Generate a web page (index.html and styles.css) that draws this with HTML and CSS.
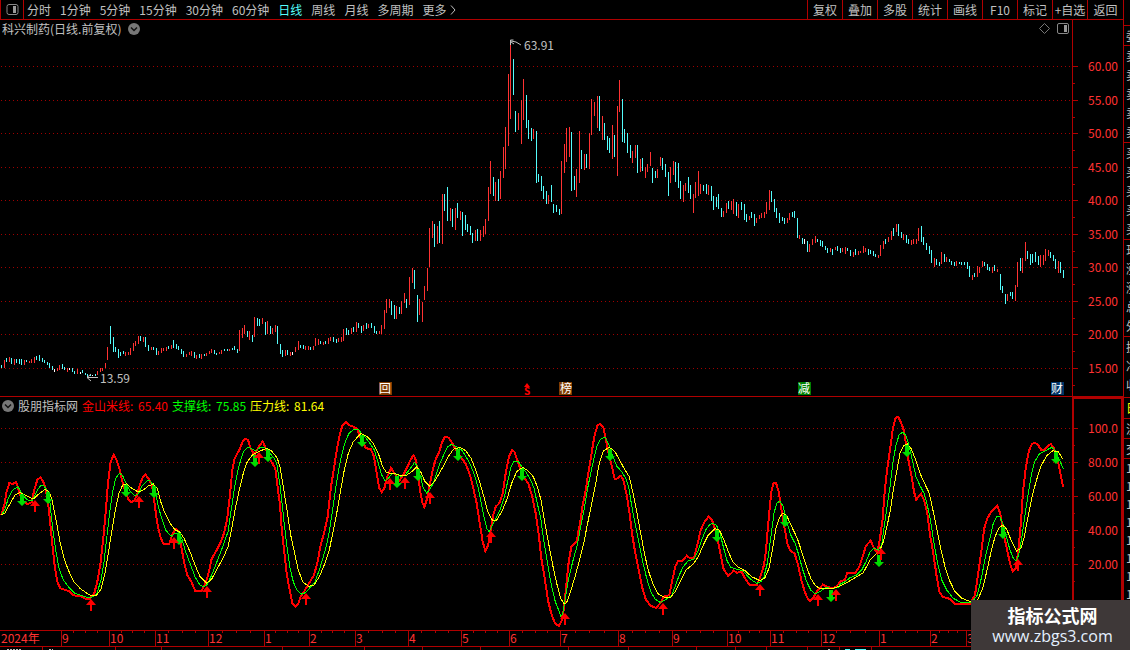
FILE: index.html
```html
<!DOCTYPE html>
<html lang="zh-CN">
<head>
    <meta charset="UTF-8">
    <meta name="viewport" content="width=device-width, initial-scale=1.0">
    <title>科兴制药 日线</title>
    <link rel="stylesheet" href="styles.css">
</head>
<body>

<div class="app">
    <main class="main">
        <nav class="toolbar">
            <button class="layout-btn" aria-label="布局">
                <svg width="13" height="11" viewBox="0 0 13 11"><rect x="1" y="0.5" width="11" height="10" rx="2" fill="none" stroke="#888"/><rect x="7" y="2" width="3" height="7" fill="#999"/></svg>
            </button>
            <div class="periods">
                <button>分时</button>
                <button>1分钟</button>
                <button>5分钟</button>
                <button>15分钟</button>
                <button>30分钟</button>
                <button>60分钟</button>
                <button class="active">日线</button>
                <button>周线</button>
                <button>月线</button>
                <button>多周期</button>
                <button class="more">更多
                    <svg width="6" height="10" viewBox="0 0 6 10"><path d="M1 0.5l4 4.5l-4 4.5" fill="none" stroke="#c0c0c0"/></svg>
                </button>
            </div>
            <div class="tools">
                <button>复权</button>
                <button>叠加</button>
                <button>多股</button>
                <button>统计</button>
                <button>画线</button>
                <button>F10</button>
                <button>标记</button>
                <button>+自选</button>
                <button>返回</button>
            </div>
        </nav>

        <section class="panel price">
            <header class="panel-head">
                <h1>科兴制药(日线.前复权)</h1>
                <button class="round" aria-label="展开">
                    <svg width="12" height="12" viewBox="0 0 12 12"><circle cx="6" cy="6" r="6" fill="#777"/><path d="M3 4.5l3 3l3-3" fill="none" stroke="#111" stroke-width="1.5"/></svg>
                </button>
                <div class="head-icons">
                    <svg width="11" height="11" viewBox="0 0 11 11"><path d="M5.5 0.5l5 5l-5 5l-5-5z" fill="none" stroke="#777"/></svg>
                    <svg width="12" height="12" viewBox="0 0 12 12"><rect x="0.5" y="0.5" width="11" height="10" rx="1.5" fill="none" stroke="#888"/><rect x="7" y="2" width="3" height="7" fill="#999"/></svg>
                </div>
                <div class="axis-cell"></div>
            </header>
            <svg class="plot" viewBox="0 38 1123 358">
                <g id="price-grid"></g>
                <g id="candles"></g>
                <path class="axis" d="M1072.5 38v358"/>
                <g class="note">
                    <path d="M510.5 45v-5h3M511 41l5 1l5 3M511 42l3 2"/>
                    <text x="524" y="50">63.91</text>
                    <path d="M98 377.5h-11M91 374l-4 3.5l4 3.5"/>
                    <text x="100" y="383">13.59</text>
                </g>
                <g class="badges">
                    <rect x="379" y="382" width="13" height="13" fill="#803c00"/>
                    <text x="379" y="393">回</text>
                    <rect x="559" y="382" width="13" height="13" fill="#803c00"/>
                    <text x="560" y="393">榜</text>
                    <rect x="798" y="382" width="13" height="13" fill="#008000"/>
                    <text x="798" y="393">减</text>
                    <rect x="1051" y="382" width="13" height="13" fill="#003468"/>
                    <text x="1051" y="393">财</text>
                    <path d="M524 387l3-4l3 4z" fill="#f00"/>
                    <text class="dollar" x="524" y="395">S</text>
                </g>
            </svg>
        </section>

        <section class="panel indicator">
            <header class="panel-head">
                <button class="round" aria-label="展开指标">
                    <svg width="12" height="12" viewBox="0 0 12 12"><circle cx="6" cy="6" r="6" fill="#777"/><path d="M3 4.5l3 3l3-3" fill="none" stroke="#111" stroke-width="1.5"/></svg>
                </button>
                <h2>股朋指标网</h2>
                <span class="val red">金山米线: <b>65.40</b></span>
                <span class="val green">支撑线: <b>75.85</b></span>
                <span class="val yellow">压力线: <b>81.64</b></span>
                <div class="axis-cell"></div>
            </header>
            <svg class="plot" viewBox="0 415 1123 215">
                <g id="ind-grid"></g>
                <g id="lines"></g>
                <g id="arrows"></g>
                <path class="axis thick" d="M1073 415v215M1122 415v215"/>
            </svg>
        </section>

        <svg class="timeline" viewBox="0 630 1123 20">
            <path class="axis" d="M0 630.5h1123M0 646.5h1123"/>
            <g id="months"></g>
            <path class="axis" d="M42.5 647v3M115.5 647v3M161.5 647v3M282.5 647v3M364.5 647v3M422.5 647v3M480.5 647v3M568.5 647v3M628.5 647v3M696.5 647v3M735.5 647v3M766.5 647v3M807.5 647v3M839.5 647v3M871.5 647v3"/>
            <path d="M7 649.5h15M49 649.5h4M828 649.5h2" stroke="#c0c0c0" stroke-dasharray="2 1"/>
            <path d="M845 649.5h5M855 649.5h11" stroke="#54fcfc"/>
        </svg>
    </main>

    <aside class="quotes">
        <div class="group first"></div>
        <div class="group"><span>委比</span></div>
        <div class="group five"><span>卖五</span><span>卖四</span><span>卖三</span><span>卖二</span><span>卖一</span></div>
        <div class="group five"><span>买一</span><span>买二</span><span>买三</span><span>买四</span><span>买五</span></div>
        <div class="group five"><span>现价</span><span>涨跌</span><span>涨幅</span><span>总量</span><span>外盘</span></div>
        <div class="group three"><span>换手</span><span>净资</span><span>收益</span></div>
        <div class="group five yellow"><span>日期</span></div>
        <div class="group"><span>流通</span></div>
        <div class="group"><span>交易</span></div>
        <div class="group ticks"><span>14:56</span><span>14:56</span><span>14:56</span><span>14:56</span><span>14:56</span><span>14:56</span><span>14:57</span><span>15:00</span></div>
    </aside>

    <div class="watermark">
        <strong>指标公式网</strong>
        <a href="#">www.zbgs3.com</a>
    </div>
</div>

<script src="chart.js"></script>
</body>
</html>
```
FILE: styles.css
```css
* {
    box-sizing: border-box;
}

body {
    margin: 0;
    background: #000;
    color: #c0c0c0;
    font-family: "Noto Sans CJK SC", sans-serif;
    font-size: 12px;
    line-height: 18px;
}

button {
    padding: 0;
    border: none;
    background: none;
    color: inherit;
    font: inherit;
    cursor: pointer;
}

svg {
    display: block;
}

.app {
    position: relative;
    display: grid;
    grid-template-columns: minmax(0, 1fr) 7px;
    min-height: 100vh;
    overflow: hidden;
}

/* top bar */
.toolbar {
    display: flex;
    height: 20px;
    border-bottom: 1px solid #b00000;
}

.layout-btn {
    display: flex;
    align-items: center;
    justify-content: center;
    width: 24px;
    border-left: 1px solid #b00000;
    border-right: 1px solid #b00000;
}

.periods {
    display: flex;
    flex: 1;
    gap: 9px;
    padding-left: 3px;
    white-space: nowrap;
}

.periods .active {
    color: #54fcfc;
}

.more {
    display: flex;
    align-items: center;
    gap: 4px;
}

.tools {
    display: flex;
}

.tools button {
    width: 35px;
    border-left: 1px solid #b00000;
    white-space: nowrap;
}

.tools button:last-child {
    width: 36px;
}

/* chart panels */
.panel-head {
    display: flex;
    align-items: center;
    gap: 3px;
    height: 18px;
    padding-left: 2px;
    white-space: nowrap;
}

.panel-head h1,
.panel-head h2 {
    margin: 0;
    font-size: 12px;
    font-weight: normal;
}

.panel-head h1 {
    margin-right: 4px;
}

.head-icons {
    display: flex;
    gap: 7px;
    margin-left: auto;
}

.axis-cell {
    align-self: stretch;
    width: 51px;
    border-left: 1px solid #b00000;
}

.price {
    border-bottom: 1px solid #b00000;
}

.indicator .panel-head {
    gap: 4px;
}

.indicator .axis-cell {
    margin-left: auto;
    border: 2px solid #b00000;
    border-bottom: none;
}

.val b {
    margin-left: 2px;
    font-weight: normal;
}

.red {
    color: #ff0000;
}

.green {
    color: #00ff00;
}

.yellow {
    color: #ffff00;
}

.plot,
.timeline {
    width: 100%;
    height: auto;
}

.axis {
    fill: none;
    stroke: #b00000;
    shape-rendering: crispEdges;
}

.thick {
    stroke-width: 2;
}

.grid {
    stroke: #a00000;
    stroke-dasharray: 1 3;
    shape-rendering: crispEdges;
}

.scale,
.month {
    fill: #ff3232;
    font-size: 12px;
}

.note path {
    fill: none;
    stroke: #c0c0c0;
}

.note text {
    fill: #c0c0c0;
    font-size: 12px;
}

.badges text {
    fill: #fff;
    font-size: 12px;
}

.badges .dollar {
    fill: #f00;
    font-size: 10px;
    font-weight: bold;
}

#candles,
#lines {
    shape-rendering: crispEdges;
}

#lines polyline {
    fill: none;
}

/* clipped quote list on the right edge */
.quotes {
    height: 0;
    min-height: 100%;
    border-left: 1px solid #b00000;
    overflow: hidden;
}

.group {
    padding-left: 2px;
    border-top: 1px solid #b00000;
}

.group span {
    display: block;
    width: 30px;
    line-height: 19px;
}

.first {
    height: 25px;
    border-top: none;
}

.five {
    padding-bottom: 1px;
}

.three {
    padding-bottom: 3px;
}

.group.ticks span {
    line-height: 18px;
}

.watermark {
    position: absolute;
    right: 0;
    bottom: 0;
    width: 159px;
    padding: 4px 0 3px 4px;
    background: #3e3838;
    color: #fff;
    text-align: center;
}

.watermark strong {
    display: block;
    font-size: 18px;
    line-height: 22px;
}

.watermark a {
    display: block;
    color: #e4f0ff;
    font-family: "Open Sans", sans-serif;
    font-size: 16px;
    line-height: 21px;
    text-decoration: none;
}
```
FILE: chart.js
```js
const NS = 'http://www.w3.org/2000/svg';
const UNIT = 3; // series values are stored in thirds of a chart unit
const COLORS = { r: '#ff3232', c: '#54fcfc', w: '#ffffff' };

// "x,high,low" + direction (r up, c down, w flat)
const candles = [
    { x: 0, y: 300, bars: '4,195,204c 13,180,204r 19,174,186c 28,171,186r 34,174,192c 43,177,195r 49,177,189c 58,177,192c 64,177,195c 73,180,195r 79,180,186c 88,183,189r 94,177,189r 103,171,189r 109,168,180c 118,165,183c 127,174,186c 133,180,189c 142,186,195c 148,189,204c 157,198,210c 163,206,216w 172,204,213r 178,195,210r 187,192,207c 193,201,210c 202,204,216r 208,204,210w 217,204,216c 223,213,222c 232,207,222r 241,216,222w 247,210,219c 256,219,225c 262,222,231c 271,222,228c 277,224,228w 286,222,228c 292,213,225r 301,204,216r 307,204,213r 316,189,204r 322,141,180r 331,78,132c 340,111,156c 346,141,156c 355,147,174c 361,156,168c 370,153,162c 376,156,168r 385,156,165r 391,144,165r 400,129,153r 406,123,138r 415,108,132r 421,108,123c 430,111,126r 436,111,141c 445,135,153c 454,141,150r 460,141,150c 469,144,165c 475,153,165r 484,144,159r 490,144,153r 499,141,153r 505,138,147c 514,135,147r 520,120,144c 529,132,147c 535,138,150c 544,147,162c 550,153,171c 559,162,171r 568,156,165r 574,153,168r 583,156,174c 589,165,177r 598,162,174c 604,162,177r 613,162,168c 619,159,168r 628,153,162r 634,147,159r 643,150,162c 649,159,165c 658,156,162r 664,150,162r 673,147,153c 682,147,153c 688,147,153r 697,144,150c 703,138,150c 712,147,159c 718,90,153r 727,84,114r 733,75,102r 742,93,111c 748,93,120r 757,105,126c 763,51,111r 772,54,78c 778,57,78c 787,54,72r 796,66,105c 802,63,102r 811,78,102c 817,84,102r 826,75,96r 832,78,132c 841,132,162c 847,150,171c 856,150,168r 862,150,165c 871,156,168r 877,156,165w 886,141,156r 895,123,150r 901,135,144c 910,135,147c 916,138,150r 925,138,150r 931,141,150c 940,138,150r 946,114,138r 955,117,135r 961,123,132c 970,126,135r 976,123,132c 985,114,132r 991,111,123r 1000,111,126c 1009,117,129c 1015,114,126r 1024,111,126r 1030,87,123r 1039,84,105c 1045,90,105c 1054,84,102r 1060,81,96c 1069,66,96r 1075,69,84c 1084,78,99c 1090,75,93r 1099,69,87c 1105,72,84r 1114,69,84c 1123,78,99c 1129,93,102c 1138,93,102r' },
    { x: 380, y: 180, bars: '4,435,462r 13,390,447r 19,357,399r 28,357,384r 34,363,405c 43,375,417c 49,378,417r 58,381,402c 64,363,402r 73,339,369r 79,357,384c 88,291,375r 97,264,309r 103,270,327c 112,345,426c 118,357,405r 127,366,426r 133,318,360r 142,264,333r 148,144,261r 157,123,174r 163,132,201c 172,138,192r 178,123,189c 187,42,192r 193,42,93c 202,21,123c 211,84,123r 217,87,141c 226,84,150r 232,69,114c 241,93,120r 247,96,168c 256,105,150c 262,132,156c 271,138,165c 277,159,189c 286,150,183r 292,147,183c 301,150,183r 310,138,171r 316,117,162r' },
    { x: 380, y: 30, bars: '325,471,573r 331,393,492r 340,441,498c 346,456,513r 355,447,513c 361,423,507r 370,351,444r 376,291,417r 385,132,348r 391,39,267r 400,87,195c 406,243,306c 415,249,300r 424,210,342r 430,147,270r 439,195,294c 445,270,327c 454,294,333c 460,297,327r 469,303,459c 475,432,456c 484,438,483c 490,468,507c 499,483,522c 505,495,522r 514,465,516c 520,522,549c 529,525,546c 538,537,555c 544,393,552r 553,342,429r 559,294,396r 568,291,381r 574,306,483c 583,438,480c 589,417,501r 598,303,459r 604,360,417c 613,372,420r 619,372,414c 628,309,417r 634,207,315r 643,216,258r 652,198,294r 658,198,303c 667,258,330r 673,279,330c 682,318,360c 688,324,369c 697,285,387r 703,315,381c 712,228,438r 718,150,246r 727,207,336c 733,297,339c 742,309,369c 751,345,384c 757,363,399r 766,345,384r 772,345,429c 781,387,426r 787,384,423c 796,411,444r 802,402,426r 811,366,408r 817,414,459c 826,423,444c 832,417,444r 841,381,408r 847,384,420c 856,402,441c 865,426,498c 871,411,459r 880,393,435r 886,396,456c 895,399,474c 901,453,507c 910,465,516r 916,459,483r 925,441,489c 931,465,507c 940,492,549r 946,456,504r 955,423,498r 961,462,492r 970,465,483c 979,462,492c 985,465,495r' },
    { x: 700, y: 150, bars: '34,108,153c 40,138,180c 49,141,171c 55,132,177c 64,174,201c 70,183,201r 79,159,189r 85,153,177c 94,153,180r 100,147,192r 109,156,198c 115,162,204r 124,156,180c 133,162,210c 139,192,216c 148,198,210r 154,186,204c 163,192,228c 169,204,219r 178,195,207r 184,189,204r 193,186,204r 199,156,192r 208,120,180r 214,123,156c 223,147,186c 229,174,204c 238,189,219c 247,201,213c 253,204,222c 262,204,219r 268,189,210r 277,186,201c 283,183,204c 292,204,264c 298,255,267r 307,264,282c 313,267,282w 322,273,306c 328,282,306r 337,267,285r 346,258,279r 352,267,276c 361,270,288c 367,273,291c 376,288,300c 382,294,309c 391,294,306r 397,297,315c 406,291,300r 412,288,303c 421,294,309c 427,294,306r 436,291,312r 442,294,303c 451,300,318c 460,306,321r 466,297,315c 475,303,315r 481,303,309r 490,288,309r 496,294,306r 505,297,315c 511,300,312c 520,303,318c 526,312,321c 535,315,324r 541,285,318r 550,273,297r 556,267,282c 565,261,276r 574,243,270r 580,234,258c 589,222,246r 595,222,258c 604,246,264c 610,252,270r 619,255,279c 625,267,282c 634,270,285r 640,267,282r 649,267,282r 655,234,273r 664,228,276c 670,261,285c 679,279,300c 688,288,312c 694,300,339c 703,324,351r 709,327,345c 718,336,348c 724,306,342r 733,312,336c 739,321,336r 748,327,336c 754,333,345c 763,336,348c 769,333,348r 778,336,342c 784,336,345c 793,336,345c 802,336,357c 808,348,381c 817,375,390r 823,369,381c 832,348,381r 838,351,369r 847,333,351r 853,336,348c 862,342,360c 868,351,363c 877,351,369r 883,345,363c 892,357,366r 901,372,420c 907,408,429c 916,432,462c 922,432,453r 931,426,438c 937,426,447c 946,405,453r 952,336,411r 961,324,363c 967,324,369r 976,276,333r 982,303,327c 991,312,345c 997,312,339c 1006,306,336c 1015,318,345c 1021,315,351r 1030,315,345r 1036,297,333r 1045,300,318r 1051,306,324c 1060,315,333c 1066,327,357c 1075,333,369r 1081,336,369c 1090,360,384c' }
];

const IND_TOP = 395;
const lines = [
    { color: '#ff0000', width: 2, parts: [
        [0, '4 360 13 330 19 294 28 265 40 266 49 261 56 285 62 303 72 320 82 328 95 322 103 284 112 255 121 247 129 258 137 280 146 340 155 430 165 520 172 560 181 580 208 589 221 601 243 604 260 613 270 611 283 595 292 560 301 510 310 430 318 340 324 265 332 200 341 180 349 193 358 220 366 255 375 285 385 312 394 322 403 316 410 303 418 275 427 250 436 238 446 252 456 270 463 320 472 385 481 425 490 446 508 446 518 415 528 402 536 412 543 450 552 500 562 540 574 560 586 588 604 589 618 560 627 530 634 494 650 465 662 442 672 415 681 375 690 300 697 225 704 190 718 165 728 140 736 131 744 135 752 160 763 180 776 155 788 139 797 160 806 185 817 205 826 220 834 285'],
        [280, '0 330 5 400 12 465 20 535 28 580 37 625 46 634 55 625 62 605 72 590 90 560 102 540 112 505 122 450 132 415 143 365 153 275 162 220 172 155 180 115 188 90 198 81 208 91 220 95 232 102 244 135 258 160 272 162 282 185 290 235 298 280 305 291 313 280 322 245 333 218 343 235 358 258 370 240 380 220 390 198 400 181 406 190 413 230 420 285 427 322 433 336 440 315 449 270 458 225 468 190 478 170 487 140 495 125 506 128 517 145 528 165 543 187 558 208 570 240 580 280 590 325 600 390 608 440 616 468 624 452 632 405 640 360 647 335 658 325 668 295 677 235 687 185 696 165 703 170 712 195 722 225 735 252 745 265 757 305 768 360 777 425 784 490 794 550 805 620 815 660 825 685 837 693'],
        [560, '4 680 12 640 18 580 26 500 34 456 50 438 60 385 68 330 77 285 85 235 94 180 103 125 112 93 120 86 130 97 138 135 147 180 157 220 164 252 173 250 182 242 190 255 200 300 208 350 216 415 226 475 236 525 246 575 258 615 272 632 288 639 300 625 312 605 328 600 338 550 346 515 354 497 366 499 380 482 390 490 402 490 412 450 422 405 434 380 446 364 456 375 466 405 474 440 482 480 490 520 504 543 514 535 521 527 530 533 545 530 555 550 568 569 590 570 600 548 612 510 618 465 626 370 634 290 641 263 648 263 656 290 664 340 673 395 682 445 690 466 704 476 714 510 724 555 734 590 742 608 750 618 760 608 774 585 788 569 800 575 822 580 835 568'],
        [840, '0 560 14 555 22 534 46 534 58 515 68 485 78 452 92 437 100 455 112 475 120 430 128 370 134 290 142 220 150 165 158 105 166 70 174 65 181 78 190 100 198 145 206 200 216 250 222 290 229 314 243 296 252 315 262 355 270 420 280 475 290 545 298 590 308 605 330 612 344 626 390 627 405 600 414 540 424 470 433 400 442 370 454 350 472 332 481 355 490 410 500 460 510 505 518 530 528 520 536 455 543 380 549 290 557 220 566 170 575 148 584 143 594 150 604 165 614 164 624 152 632 147 642 160 652 190 660 230 670 277']
    ] },
    { color: '#00ff00', width: 1, parts: [
        [0, '4 360 14 345 25 310 38 285 52 276 60 284 68 300 82 314 95 318 103 305 112 285 122 272 131 272 140 285 150 325 158 400 167 465 177 520 190 555 205 575 225 595 245 602 262 607 277 606 290 597 303 555 312 500 320 430 329 350 338 290 347 250 358 235 367 240 377 262 390 288 405 302 415 297 427 272 440 258 448 256 458 268 465 285 475 335 485 370 497 405 513 424 525 415 535 414 545 428 555 465 570 505 585 545 600 570 612 576 622 568 635 540 655 490 670 450 684 410 695 335 705 270 716 215 730 170 745 156 757 163 768 167 780 158 792 156 800 163 810 175 822 190 830 205'],
        [280, '0 270 5 315 12 380 20 450 30 520 40 560 50 585 65 598 78 592 90 578 105 560 118 525 130 485 140 450 148 410 157 350 167 280 176 225 185 180 195 143 207 115 220 105 235 103 246 117 258 130 272 148 283 165 295 205 305 240 315 257 325 250 337 236 350 238 362 244 375 240 390 222 404 202 412 215 422 245 430 280 440 294 450 282 460 265 470 235 480 205 492 178 503 155 515 148 530 155 545 165 558 185 572 210 585 245 595 280 604 325 613 370 620 400 627 410 637 392 650 365 662 340 672 310 682 265 693 215 703 198 714 198 725 215 738 232 752 255 762 280 772 325 782 370 792 440 802 500 814 570 826 620 838 650'],
        [560, '2 664 8 658 16 610 26 550 38 500 52 450 62 395 72 345 82 285 92 235 102 190 112 150 122 132 135 127 145 145 157 180 170 213 185 230 197 250 206 275 214 325 224 380 236 440 248 500 260 550 272 590 285 612 300 622 315 615 335 602 345 575 358 540 370 515 385 497 402 493 413 470 425 435 437 405 450 388 460 385 470 392 480 415 490 455 500 495 512 517 530 523 548 527 560 540 575 555 590 565 603 560 612 545 622 505 632 430 642 355 650 325 660 318 670 335 680 380 692 420 705 445 715 475 727 520 740 560 752 585 765 597 780 590 797 577 815 581 835 577'],
        [840, '0 568 15 560 30 548 50 540 65 525 78 500 90 472 102 460 115 465 125 450 132 400 142 330 150 275 160 195 168 150 178 118 188 112 198 122 208 155 218 200 228 245 240 272 252 295 262 330 272 380 282 445 292 500 305 555 320 585 340 610 362 622 395 623 412 600 425 545 437 480 450 430 460 385 470 364 480 366 490 390 500 430 510 465 520 490 528 498 536 480 545 430 555 360 564 300 574 240 584 200 597 178 615 168 635 157 645 165 655 187 670 221']
    ] },
    { color: '#ffff00', width: 1, parts: [
        [0, '4 360 14 355 28 330 45 300 60 292 75 300 100 312 115 298 135 283 147 290 155 310 163 350 172 395 180 440 192 490 205 525 220 558 240 580 258 593 275 603 290 600 303 582 315 535 325 475 335 410 345 350 357 295 368 270 380 266 395 280 415 291 430 285 445 273 460 267 472 280 482 320 495 355 510 385 525 404 540 412 552 430 570 470 585 510 600 545 620 565 635 552 655 515 670 488 684 455 695 400 707 335 718 285 730 235 742 200 757 180 775 170 800 160 815 168 832 190'],
        [280, '0 215 10 275 20 340 32 420 45 480 55 525 68 560 85 574 102 570 118 545 135 505 148 465 158 415 170 355 182 285 193 225 205 175 220 140 243 115 262 125 280 145 295 175 308 215 320 233 345 236 362 242 380 240 395 230 410 216 422 230 435 260 450 274 462 262 478 235 492 210 505 185 520 163 540 157 558 168 573 190 587 225 600 265 613 310 623 350 638 377 650 375 665 350 680 315 695 265 710 230 728 217 745 228 760 245 772 275 783 315 792 370 805 440 818 510 830 565'],
        [560, '2 610 13 627 20 622 30 595 45 545 60 490 72 440 82 390 95 325 107 265 118 205 130 168 148 157 165 170 180 198 195 225 208 245 218 290 230 350 242 415 254 480 266 530 280 570 295 597 313 607 332 607 345 590 360 560 378 525 400 507 415 485 430 450 445 420 465 401 478 405 490 430 503 465 518 500 535 517 555 527 575 545 600 557 615 548 627 520 638 460 648 400 658 368 668 355 680 362 695 395 712 430 725 470 738 510 752 550 765 570 778 580 820 580 838 574'],
        [840, '0 573 20 563 45 548 70 533 90 495 105 480 118 470 130 440 142 390 152 340 160 285 170 230 180 175 190 153 202 147 213 160 225 190 240 235 255 268 268 295 280 350 290 400 302 460 315 515 328 555 345 590 365 610 395 621 413 614 428 580 440 530 452 475 465 425 477 398 488 391 500 403 515 440 530 468 543 460 553 425 563 370 575 310 588 260 602 215 620 182 638 167 655 170 668 192']
    ] }
];

// tip of each signal arrow
const sells = [[22, 506], [48, 504], [126, 497], [154, 498], [179, 545], [255, 467], [268, 462], [362, 447], [397, 488], [418, 481], [458, 461], [522, 481], [610, 461], [717, 542], [785, 527], [831, 602], [907, 457], [879, 567], [1003, 539], [1056, 464]];
const buys = [[35, 500], [91, 599], [139, 496], [174, 537], [207, 586], [259, 452], [390, 478], [306, 593], [405, 477], [430, 492], [491, 531], [565, 613], [663, 603], [760, 584], [818, 594], [836, 589], [881, 548], [1018, 559]];

const months = [[61, '9'], [109, '10'], [155, '11'], [208, '12'], [264, '1'], [309, '2'], [355, '3'], [408, '4'], [461, '5'], [509, '6'], [560, '7'], [618, '8'], [672, '9'], [727, '10'], [770, '11'], [821, '12'], [879, '1'], [930, '2'], [966, '3']];

function add(parent, tag, attrs, text) {
    const el = document.createElementNS(NS, tag);
    for (const key in attrs) el.setAttribute(key, attrs[key]);
    if (text) el.textContent = text;
    parent.appendChild(el);
    return el;
}

function drawGrid(id, rows, half) {
    const g = document.getElementById(id);
    for (const [y, label] of rows) {
        add(g, 'path', { class: 'grid', d: `M1 ${y + 0.5}H1072` });
        add(g, 'path', { class: 'axis', d: `M1073 ${y + 0.5}h5M1073 ${y + half + 0.5}h2` });
        add(g, 'text', { class: 'scale', x: 1118, y: y + 5, 'text-anchor': 'end' }, label);
    }
}

drawGrid('price-grid', [[66, '60.00'], [100, '55.00'], [133, '50.00'], [167, '45.00'], [200, '40.00'], [234, '35.00'], [267, '30.00'], [301, '25.00'], [334, '20.00'], [368, '15.00']], 17);
drawGrid('ind-grid', [[428, '100.0'], [462, '80.00'], [496, '60.00'], [530, '40.00'], [564, '20.00']], 17);

const candleLayer = document.getElementById('candles');
for (const part of candles) {
    for (const bar of part.bars.split(' ')) {
        const [x, high, low] = bar.slice(0, -1).split(',').map(Number);
        add(candleLayer, 'rect', {
            x: part.x + Math.floor(x / UNIT),
            y: part.y + high / UNIT,
            width: 1,
            height: (low - high) / UNIT,
            fill: COLORS[bar.slice(-1)]
        });
    }
}

const lineLayer = document.getElementById('lines');
for (const line of lines) {
    const points = [];
    for (const [left, data] of line.parts) {
        const n = data.split(' ').map(Number);
        for (let i = 0; i < n.length; i += 2) {
            points.push((left + n[i] / UNIT).toFixed(1) + ',' + (IND_TOP + n[i + 1] / UNIT).toFixed(1));
        }
    }
    add(lineLayer, 'polyline', { points: points.join(' '), stroke: line.color, 'stroke-width': line.width });
}

const arrowLayer = document.getElementById('arrows');
for (const [x, y] of sells) {
    add(arrowLayer, 'path', { d: `M${x} ${y}l-5-5h3v-7h4v7h3z`, fill: '#00dc00' });
}
for (const [x, y] of buys) {
    add(arrowLayer, 'path', { d: `M${x} ${y}l5 6h-4v6h-2v-6h-4z`, fill: '#ff0000' });
}

const monthLayer = document.getElementById('months');
add(monthLayer, 'text', { class: 'month', x: 1, y: 643 }, '2024年');
months.forEach(([x, label], i) => {
    add(monthLayer, 'path', { class: 'axis', d: `M${x + 0.5} 631v15` });
    add(monthLayer, 'text', { class: 'month', x: x + 1, y: 643 }, label);
    if (i < months.length - 1) {
        const step = (months[i + 1][0] - x) / 4;
        for (let k = 1; k < 4; k++) {
            add(monthLayer, 'path', { class: 'axis', d: `M${Math.round(x + step * k) + 0.5} 631v2` });
        }
    }
});
```
